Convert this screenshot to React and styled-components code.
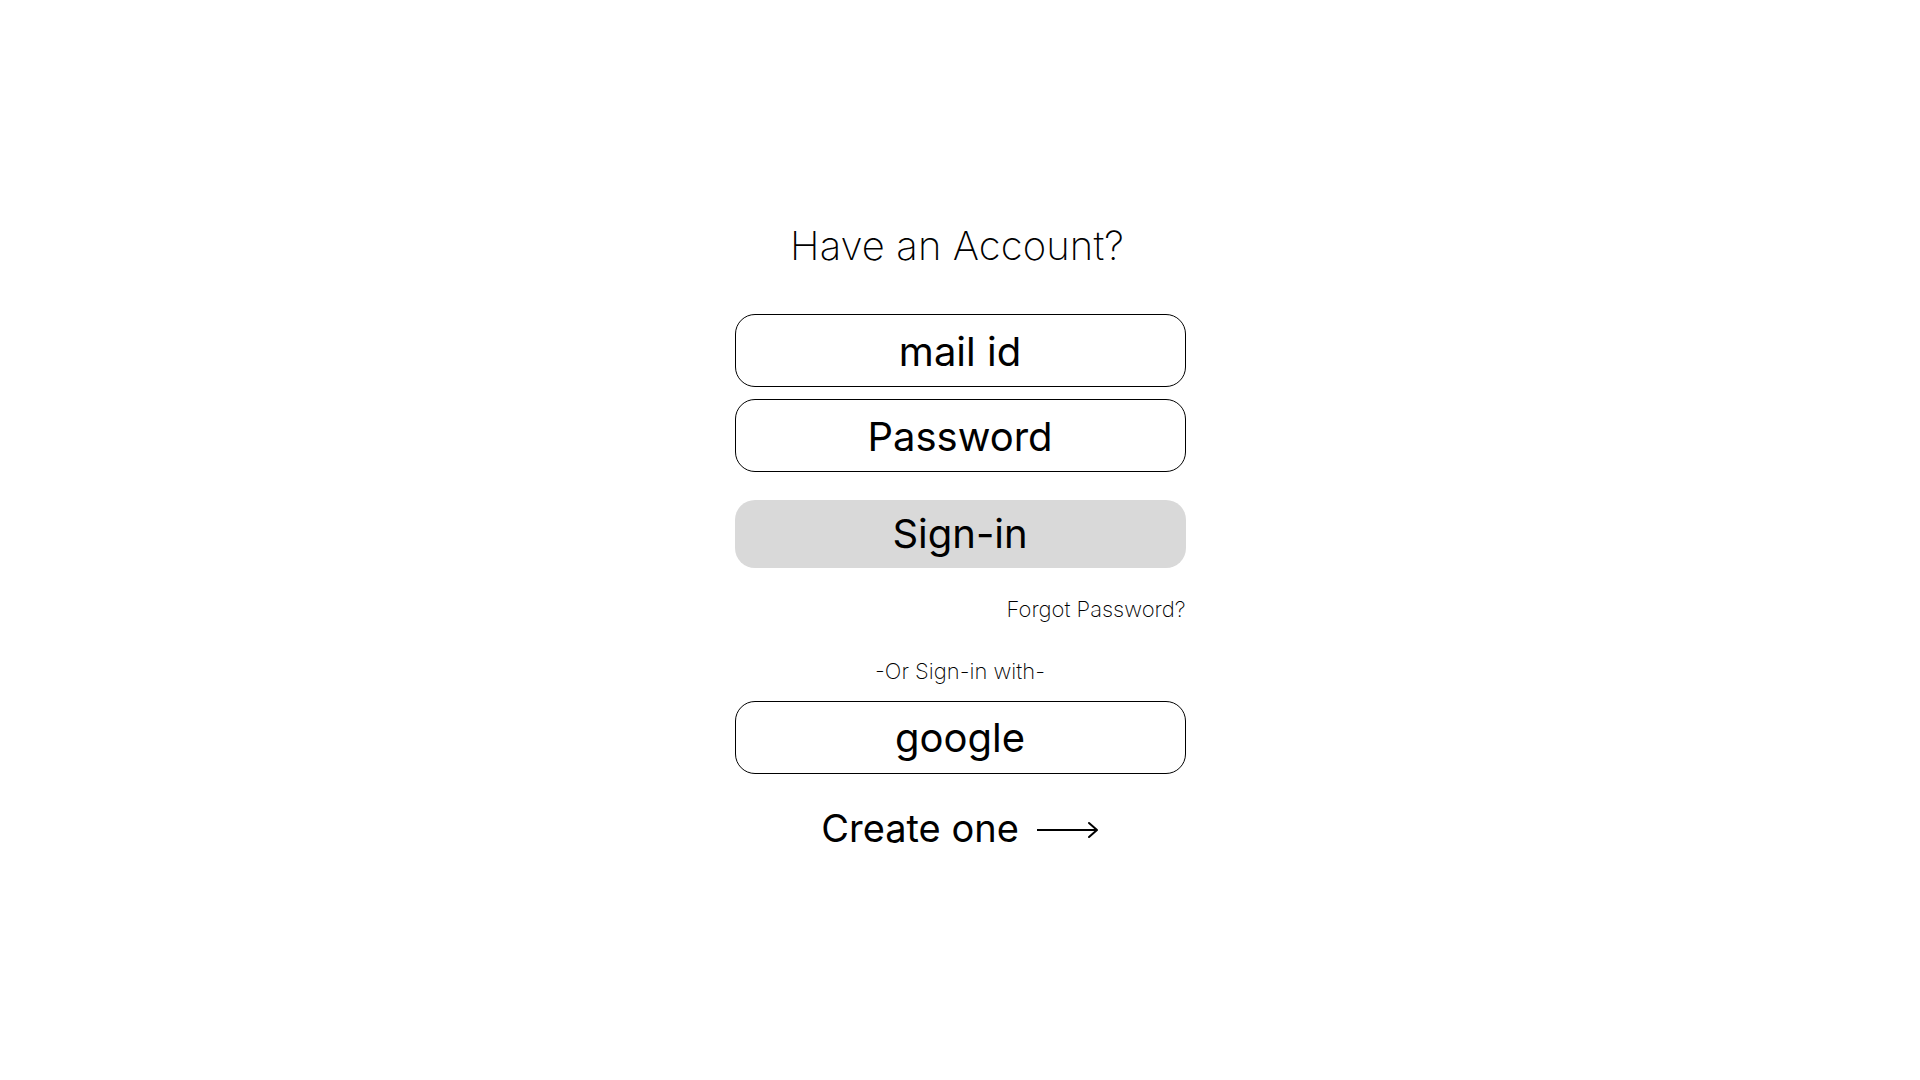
import React from 'react'
import styled, { createGlobalStyle } from 'styled-components'

const GlobalStyle = createGlobalStyle`
  html, body {
    margin: 0;
    padding: 0;
    background: #ffffff;
  }
  body {
    font-family: Inter, "Noto Sans", sans-serif;
    color: #000;
  }
`

const Page = styled.main`
  min-height: 1080px;
  display: flex;
  justify-content: center;
  padding-top: 222px;
  box-sizing: border-box;
`

const Card = styled.form`
  width: 451px;
  display: flex;
  flex-direction: column;
  align-items: stretch;
`

const Title = styled.h1`
  margin: 0 0 44px;
  padding-right: 6px;
  font-size: 40px;
  line-height: 48px;
  font-weight: 200;
  letter-spacing: 0.1px;
  text-align: center;
`

const Fields = styled.div`
  display: flex;
  flex-direction: column;
  gap: 12px;
`

const Field = styled.input`
  box-sizing: border-box;
  width: 100%;
  height: 73px;
  border: 1px solid #000;
  border-radius: 20px;
  background: #fff;
  font-family: Inter, sans-serif;
  font-size: 40px;
  font-weight: 400;
  text-align: center;
  color: #000;
  outline: none;
  padding: 2px 0 0;

  &::placeholder {
    color: #000;
    opacity: 1;
  }
`

const Button = styled.button`
  box-sizing: border-box;
  width: 100%;
  height: ${p => (p.$outline ? '73px' : '68px')};
  margin-top: ${p => p.$top || 0}px;
  border: ${p => (p.$outline ? '1px solid #000' : 'none')};
  border-radius: 20px;
  background: ${p => (p.$outline ? '#fff' : '#d9d9d9')};
  font-family: Inter, sans-serif;
  font-size: 40px;
  line-height: 48px;
  font-weight: 400;
  color: #000;
  cursor: pointer;
  padding: 0;
`

const Note = styled.p`
  margin: ${p => p.$top}px 0 0;
  font-size: 22px;
  line-height: 26px;
  font-weight: 200;
  color: #000;
  text-align: ${p => p.$align || 'center'};
`

const CreateLink = styled.a`
  margin-top: 31px;
  align-self: center;
  display: flex;
  align-items: center;
  gap: 18px;
  font-size: 38px;
  line-height: 46px;
  font-weight: 400;
  color: #000;
  text-decoration: none;
  cursor: pointer;
`

const Arrow = () => (
  <svg width="62" height="18" viewBox="0 0 62 18" fill="none" stroke="#000" strokeWidth="2" style={{ marginTop: 4 }}>
    <path d="M0 9 H60" />
    <path d="M52 2 L60 9 L52 16" strokeLinecap="round" strokeLinejoin="round" />
  </svg>
)

const App = () => {
  return (
    <>
      <GlobalStyle />
      <Page>
        <Card onSubmit={e => e.preventDefault()}>
          <Title>Have an Account?</Title>
          <Fields>
            <Field type="email" placeholder="mail id" />
            <Field type="password" placeholder="Password" />
          </Fields>
          <Button type="submit" $top={28}>Sign-in</Button>
          <Note $top={28} $align="right">Forgot Password?</Note>
          <Note $top={36}>-Or Sign-in with-</Note>
          <Button type="button" $outline $top={17}>google</Button>
          <CreateLink>
            Create one
            <Arrow />
          </CreateLink>
        </Card>
      </Page>
    </>
  )
}

export default App
